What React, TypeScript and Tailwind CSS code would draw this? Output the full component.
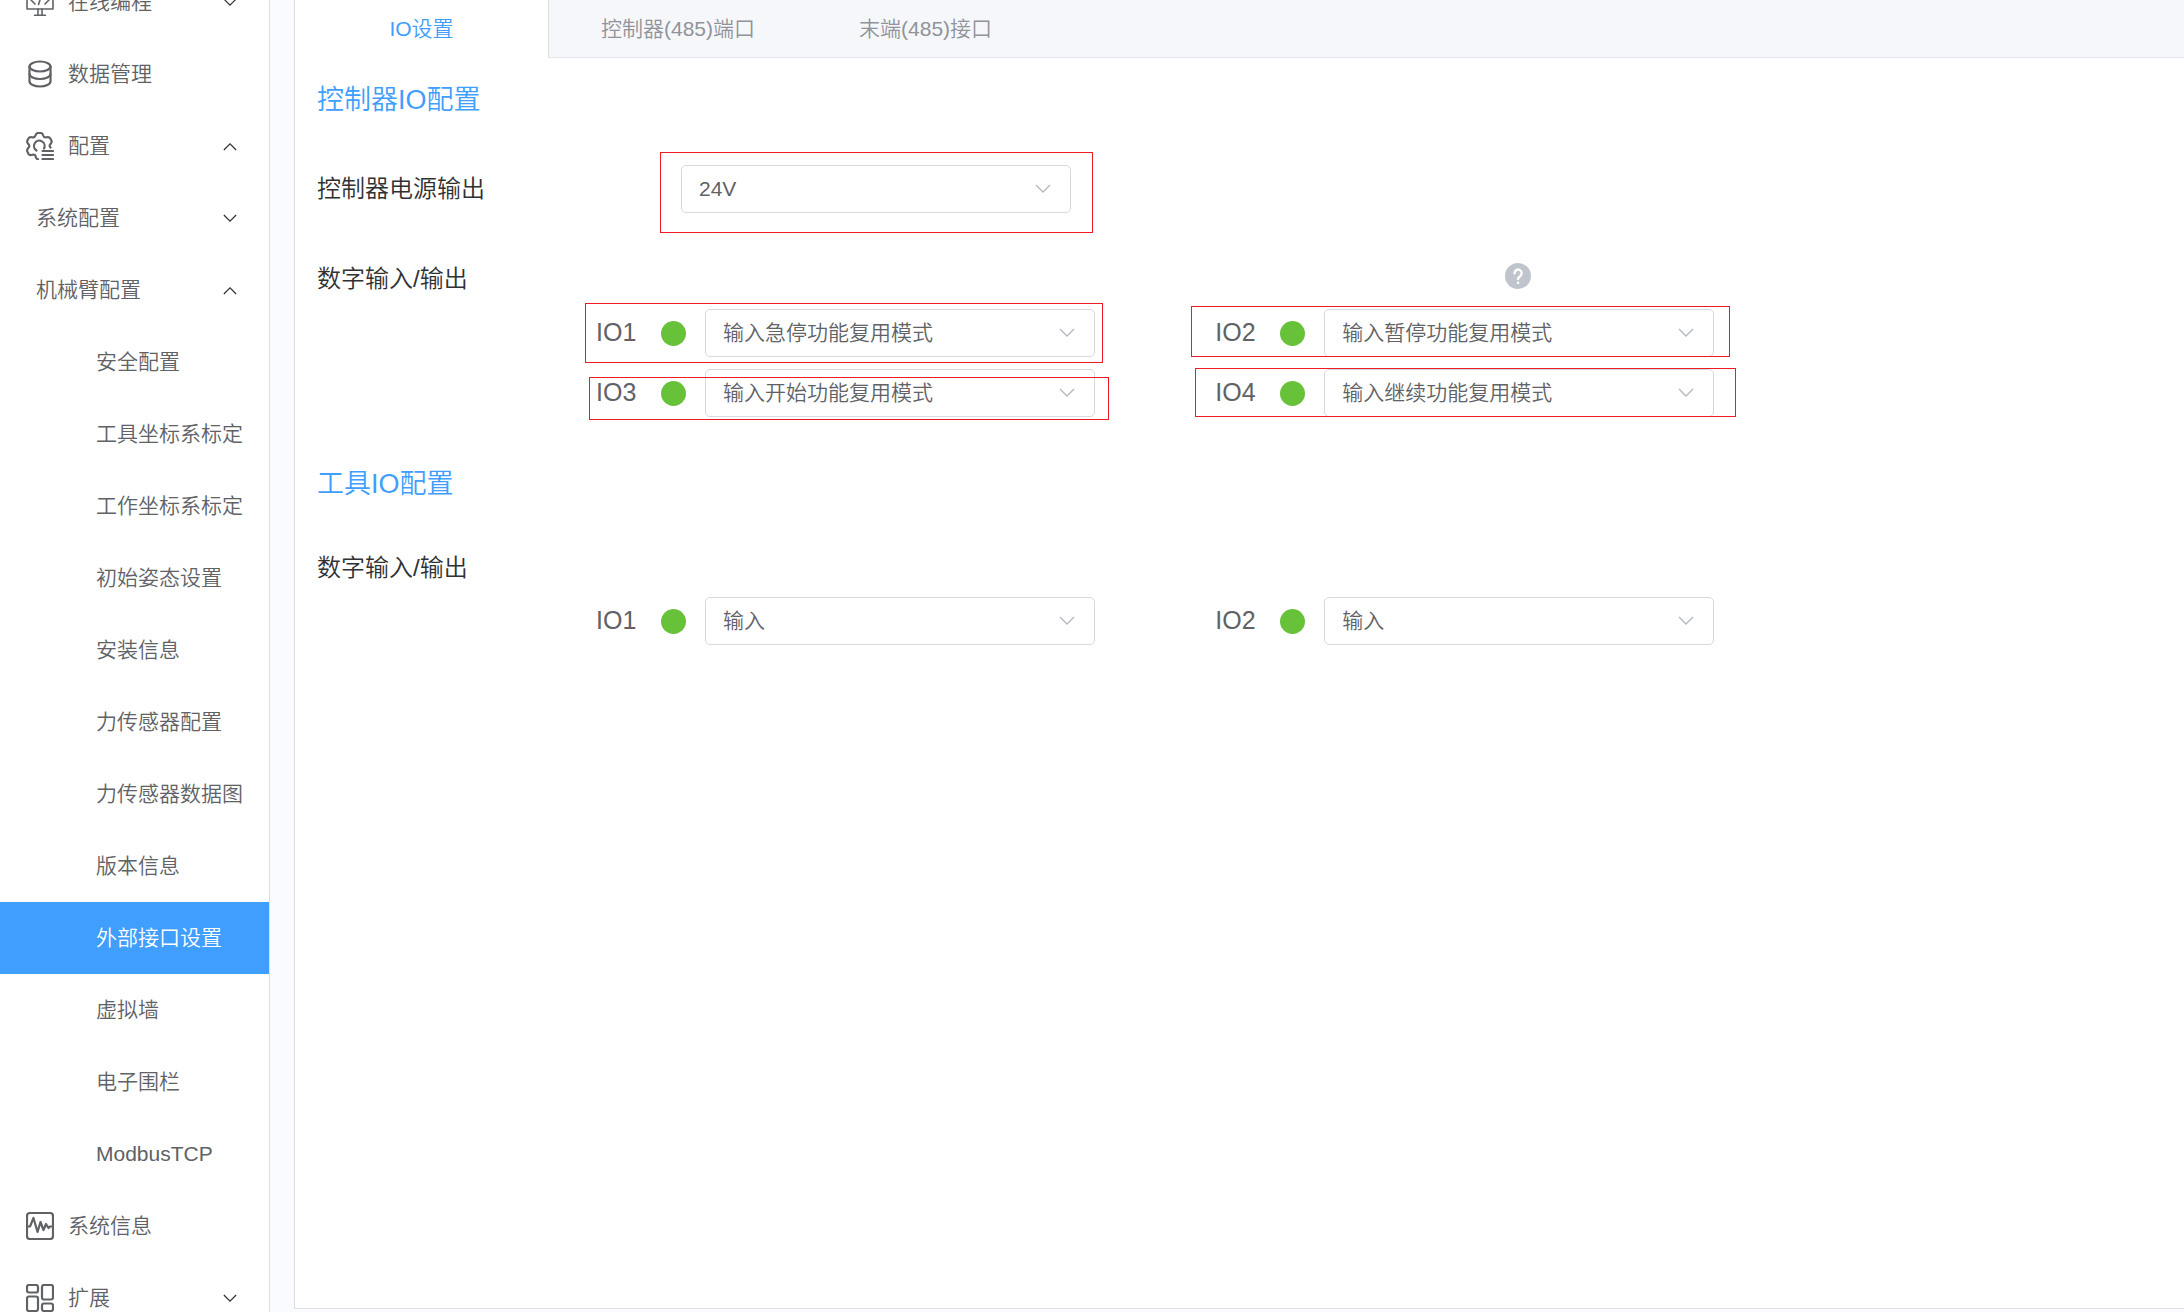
import React, { useState } from "react"

type MenuItem = {
  label: string
  level: 1 | 2 | 3
  icon?: React.ReactNode
  arrow?: "up" | "down"
}

const iconProps = {
  className: "w-7 h-7 mr-[14px] shrink-0",
  viewBox: "0 0 28 28",
  fill: "none",
  stroke: "currentColor",
  strokeWidth: 2.2,
  strokeLinecap: "round" as const,
  strokeLinejoin: "round" as const,
  "aria-hidden": true,
}

const CodeIcon = () => (
  <svg {...iconProps} strokeWidth={1.6}>
    <rect x="1" y="2" width="26" height="19" />
    <path d="M12 21v6M16 21v6M8.500 27.200h11" />
    <path d="M9 8l-4 4 4 4M19 8l4 4-4 4M15.500 7.500l-3 9" />
  </svg>
)

const DatabaseIcon = () => (
  <svg {...iconProps}>
    <ellipse cx="14" cy="6.500" rx="10.500" ry="5" />
    <path d="M3.500 6.500v15c0 2.800 4.700 5 10.500 5s10.500-2.200 10.500-5v-15" />
    <path d="M3.500 14c0 2.800 4.700 5 10.500 5s10.500-2.200 10.500-5" />
  </svg>
)

const ConfigIcon = () => (
  <svg {...iconProps}>
    <path d="M12 27H11.500C10 27 10 25.500 9.600 24.200C9 22.600 7.600 22.300 6.200 22.800C4.500 23.400 3.400 23.600 2.400 21.800L1.300 19.400C.7 17.600 1.200 17 2.400 15.800C3.600 14.600 3.600 13.200 2.400 12.100C1.200 11 .7 10.200 1.400 8.600L2.600 6.300C3.500 4.700 4.600 4.900 6.200 5.300C7.800 5.700 9 5 9.500 3.500C10 2 10.300 1 12 1H14.800C16.400 1 16.800 2 17.200 3.500C17.700 5 19 5.700 20.500 5.300C22.200 4.900 23.300 4.700 24.200 6.300L25.400 8.600C26.200 10.200 25.500 11 24.400 12.100C23.300 13.200 23.300 14.400 24.600 15.600" />
    <path d="M10.500 18.500A5.300 5.300 0 1 1 18 16.500" />
    <path d="M16.500 19H27M16.500 23H27M16.500 27H27" />
  </svg>
)

const PulseIcon = () => (
  <svg {...iconProps}>
    <rect x="1" y="1" width="26" height="26" rx="3" />
    <path d="M1.500 14.500H4L7.500 6l4 14 3-10 3 8 2.500-6 2.500 4 1.500-1.500h2" />
  </svg>
)

const ExtendIcon = () => (
  <svg {...iconProps}>
    <rect x="1" y="1" width="11" height="7.500" rx="2" />
    <rect x="16" y="1" width="11" height="14.500" rx="2" />
    <rect x="1" y="12.500" width="11" height="14.500" rx="2" />
    <rect x="16" y="19.500" width="11" height="7.500" rx="2" />
  </svg>
)

const Chevron = ({ up, className }: { up?: boolean; className: string }) => (
  <svg
    className={className}
    viewBox="0 0 16 10"
    fill="none"
    stroke="currentColor"
    strokeWidth="1.400"
    aria-hidden="true"
  >
    <path d={up ? "M1 9l7-7 7 7" : "M1 1l7 7 7-7"} />
  </svg>
)

const menu: MenuItem[] = [
  { label: "在线编程", level: 1, icon: <CodeIcon />, arrow: "down" },
  { label: "数据管理", level: 1, icon: <DatabaseIcon /> },
  { label: "配置", level: 1, icon: <ConfigIcon />, arrow: "up" },
  { label: "系统配置", level: 2, arrow: "down" },
  { label: "机械臂配置", level: 2, arrow: "up" },
  { label: "安全配置", level: 3 },
  { label: "工具坐标系标定", level: 3 },
  { label: "工作坐标系标定", level: 3 },
  { label: "初始姿态设置", level: 3 },
  { label: "安装信息", level: 3 },
  { label: "力传感器配置", level: 3 },
  { label: "力传感器数据图", level: 3 },
  { label: "版本信息", level: 3 },
  { label: "外部接口设置", level: 3 },
  { label: "虚拟墙", level: 3 },
  { label: "电子围栏", level: 3 },
  { label: "ModbusTCP", level: 3 },
  { label: "系统信息", level: 1, icon: <PulseIcon /> },
  { label: "扩展", level: 1, icon: <ExtendIcon />, arrow: "down" },
]

const indent = {
  1: "pl-[26px]",
  2: "pl-9",
  3: "pl-24",
}

const tabs = ["IO设置", "控制器(485)端口", "末端(485)接口"]

const ioModes = [
  "输入",
  "输出",
  "输入急停功能复用模式",
  "输入暂停功能复用模式",
  "输入开始功能复用模式",
  "输入继续功能复用模式",
]

// mark: offsets of the red outline around the field
const controllerIO = [
  { name: "IO1", value: "输入急停功能复用模式", mark: "-left-[11px] -right-2 -top-[6px] -bottom-[6px]" },
  { name: "IO2", value: "输入暂停功能复用模式", mark: "-left-6 -right-4 -top-[3px] bottom-0" },
  { name: "IO3", value: "输入开始功能复用模式", mark: "-left-[7px] -right-[14px] top-2 -bottom-[3px]" },
  { name: "IO4", value: "输入继续功能复用模式", mark: "-left-5 -right-[22px] -top-px bottom-0" },
]

const toolIO = [
  { name: "IO1", value: "输入" },
  { name: "IO2", value: "输入" },
]

const Mark = ({ className }: { className: string }) => (
  <span className={`absolute border border-[#ed1c24] pointer-events-none ${className}`} />
)

type SelectProps = { id: string; options: string[]; initial: string }

const Select = ({ id, options, initial }: SelectProps) => {
  const [value, setValue] = useState<string>(initial)

  return (
    <div className="relative w-[390px]">
      <select
        id={id}
        className="block w-full h-12 pl-[17px] pr-12 appearance-none rounded-[5px] border border-[#d6d9e1] bg-white text-[21px] text-[#606266]"
        value={value}
        onChange={(e) => setValue(e.target.value)}
      >
        {options.map((option) => (
          <option key={option}>{option}</option>
        ))}
      </select>
      <Chevron className="absolute right-5 top-[19px] w-4 h-[10px] text-[#b4b8c0] pointer-events-none" />
    </div>
  )
}

type FieldProps = { group: string; name: string; value: string; mark?: string }

const IOField = ({ group, name, value, mark }: FieldProps) => (
  <div className="relative flex items-center w-[499px]">
    <label htmlFor={`${group}-${name}`} className="w-[65px] text-[25px] text-[#606266]">
      {name}
    </label>
    <span className="w-[25px] h-[25px] mr-[19px] rounded-full bg-[#67c23a]" />
    <Select id={`${group}-${name}`} options={ioModes} initial={value} />
    {mark && <Mark className={mark} />}
  </div>
)

const Sidebar = () => {
  const [active, setActive] = useState("外部接口设置")

  return (
    <nav className="w-[270px] shrink-0 overflow-hidden border-r border-[#dcdfe6] bg-white">
      <ul className="-mt-[34px]">
        {menu.map((item) => (
          <li key={item.label}>
            <button
              type="button"
              onClick={() => setActive(item.label)}
              className={`flex items-center w-full h-18 pr-8 text-[21px] whitespace-nowrap ${indent[item.level]} ${
                active === item.label ? "bg-[#409eff] text-white" : "text-[#606266]"
              }`}
            >
              {item.icon}
              {item.label}
              {item.arrow && (
                <Chevron up={item.arrow === "up"} className="ml-auto w-[14px] h-[9px] text-[#303133]" />
              )}
            </button>
          </li>
        ))}
      </ul>
    </nav>
  )
}

const App = () => {
  const [tab, setTab] = useState(tabs[0])

  return (
    <div className="flex h-screen overflow-hidden bg-[#fafbff] font-[350] font-['Liberation_Sans','Noto_Sans_CJK_SC',sans-serif]">
      <Sidebar />
      <main className="flex-1 min-w-0 ml-6 mb-[3px] border-l border-b border-[#dcdfe6] bg-white">
        <div role="tablist" className="flex h-[58px] border-b border-[#e4e7ed] bg-[#f5f7fa]">
          {tabs.map((name) => (
            <button
              key={name}
              type="button"
              role="tab"
              aria-selected={tab === name}
              onClick={() => setTab(name)}
              className={`h-[58px] text-[21px] whitespace-nowrap ${
                tab === name
                  ? "w-[254px] border-r border-[#dcdfe6] bg-white text-[#409eff]"
                  : "px-[52px] text-[#909399]"
              }`}
            >
              {name}
            </button>
          ))}
        </div>

        <div className="pl-[22px]">
          <h2 className="pt-[22px] text-[27px] leading-10 text-[#409eff]">控制器IO配置</h2>
          <div className="flex items-center mt-[45px] text-2xl text-[#303133]">
            <label htmlFor="power" className="w-[277px]">
              控制器电源输出
            </label>
            <div className="relative ml-[87px]">
              <Select id="power" options={["0V", "12V", "24V"]} initial="24V" />
              <Mark className="-left-[21px] -right-[22px] -top-[13px] -bottom-5" />
            </div>
          </div>

          <div className="flex items-center h-10 mt-[46px]">
            <h3 className="w-[279px] text-2xl text-[#303133]">数字输入/输出</h3>
            <div className="grid flex-1 grid-cols-[39%_1fr]">
              <button
                type="button"
                aria-label="帮助"
                className="col-start-2 ml-[290px] mb-[6px] w-[26px] h-[26px] rounded-full bg-[#c0c4cc] text-white"
              >
                <svg viewBox="0 0 26 26" fill="none" stroke="currentColor" strokeWidth="2.400" strokeLinecap="round">
                  <path d="M9.500 10.200a3.600 3.600 0 1 1 5.600 3c-1.300.8-2 1.500-2 2.800" />
                  <path d="M13.100 19.700v.2" />
                </svg>
              </button>
            </div>
          </div>
          <div className="grid grid-cols-[39%_1fr] gap-y-3 mt-[10px] ml-[279px]">
            {controllerIO.map((io) => (
              <IOField key={io.name} group="controller" {...io} />
            ))}
          </div>

          <h2 className="mt-[47px] text-[27px] leading-10 text-[#409eff]">工具IO配置</h2>
          <h3 className="mt-11 text-2xl leading-10 text-[#303133]">数字输入/输出</h3>
          <div className="grid grid-cols-[39%_1fr] mt-[9px] ml-[279px]">
            {toolIO.map((io) => (
              <IOField key={io.name} group="tool" {...io} />
            ))}
          </div>
        </div>
      </main>
    </div>
  )
}

export default App
